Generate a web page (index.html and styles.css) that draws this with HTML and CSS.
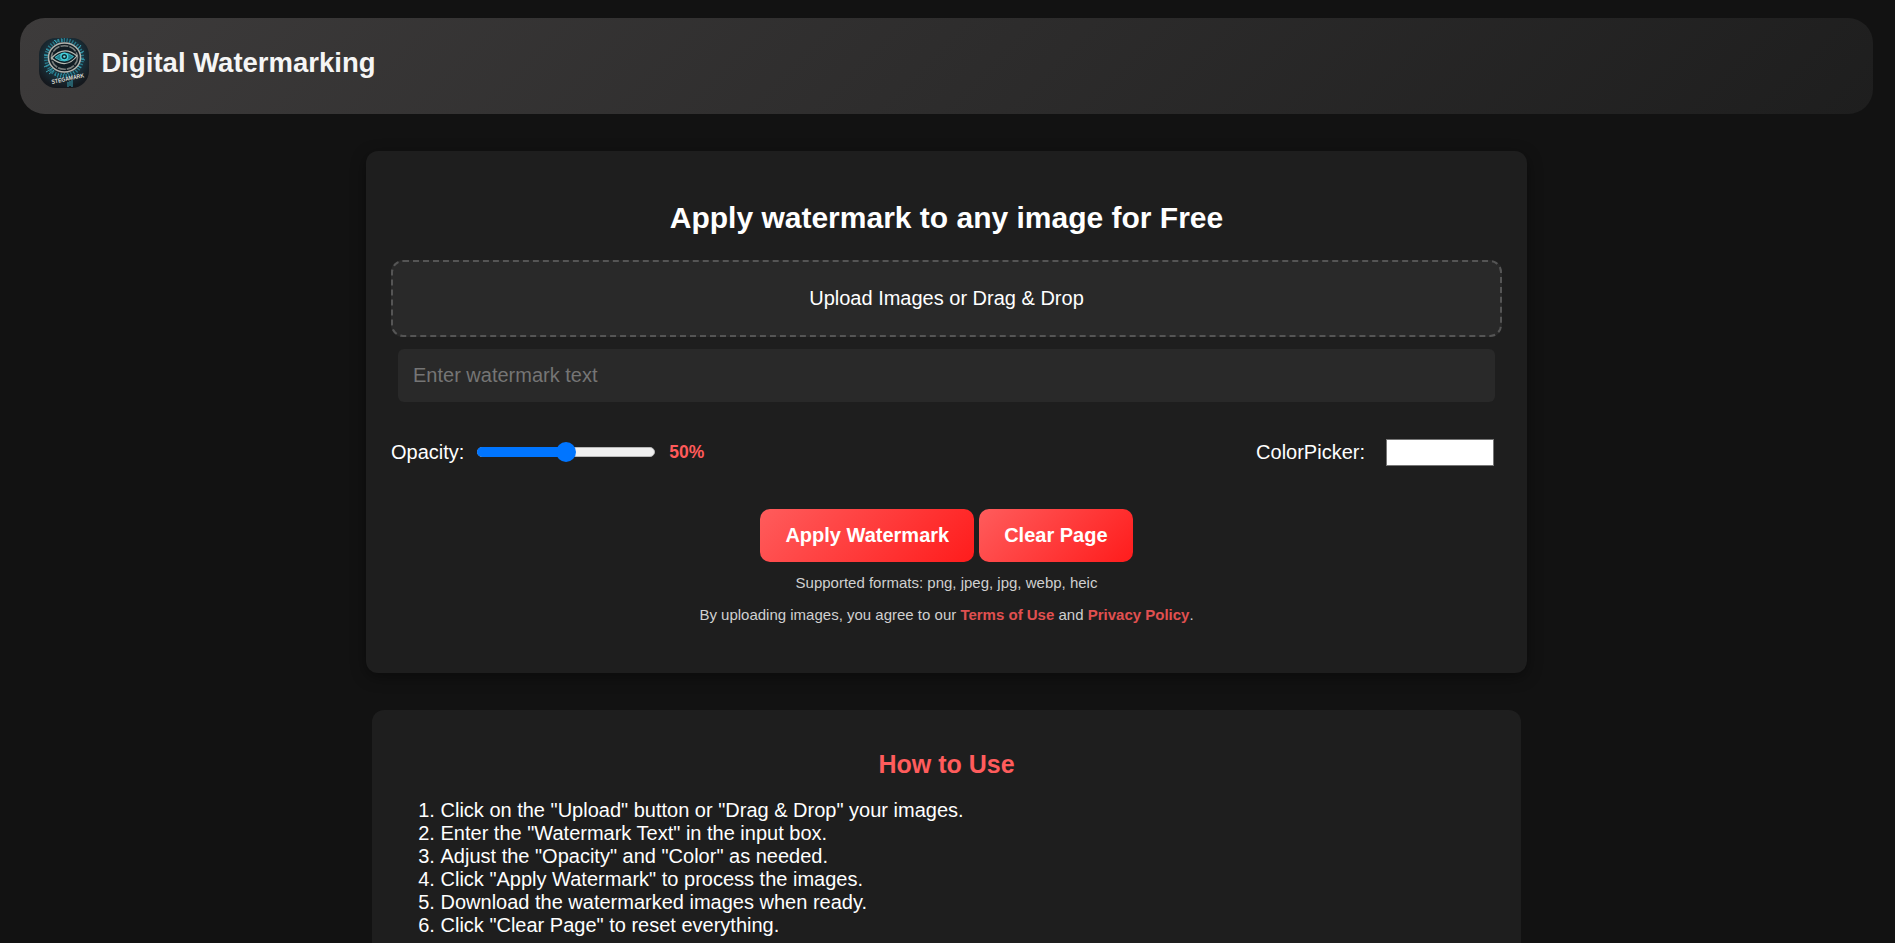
FILE: index.html
```html
<!DOCTYPE html>
<html lang="en">
<head>
<meta charset="utf-8">
<title>Digital Watermarking</title>
<link rel="stylesheet" href="styles.css">
</head>
<body>
<header class="header">
  <svg class="logo" viewBox="0 0 50 50" aria-label="Stegamark">
    <defs>
      <radialGradient id="glow" cx="50%" cy="40%" r="60%"><stop offset="0" stop-color="#1d4450"/><stop offset=".65" stop-color="#1a2f39"/><stop offset="1" stop-color="#15191e"/></radialGradient>
    </defs>
    <rect width="50" height="50" rx="17" fill="url(#glow)"/>
    <g fill="none">
      <circle cx="25" cy="20" r="18" stroke="#27788a" stroke-width="4" stroke-dasharray="1.3 1.5"/>
      <path d="M15 2l3 3M19 1v3M23 1v3M7 11l3 2M5 17l4 1M42 7l-3 4M45 13l-4 2M46 22l-4-1M5 29l6-3M7 34l7-4M10 36l5-4M42 30l-5-3M29 44v5M33 42v7M31 43v5" stroke="#39a0b2"/>
      <path d="M16 37l20-3M18 39l10-2" stroke="#2a8da0" stroke-width="1.6" stroke-dasharray="1 2"/>
    </g>
    <ellipse cx="25.5" cy="19.5" rx="16" ry="14.5" fill="#101c23" stroke="#b4b4ae" stroke-width="1.5"/>
    <ellipse cx="25.5" cy="19.5" rx="13" ry="11.8" fill="none" stroke="#777c7b" stroke-width="1.6" stroke-dasharray="8 1"/>
    <path d="M12.5 20Q25 7 38 18Q27 32 12.5 20Z" fill="#10242c" stroke="#b9bcb5" stroke-width="1.2"/>
    <path d="M16 19.5Q25 11.5 34.5 18.5Q26 27 16 19.5Z" fill="#247f8e" stroke="#44bdc9" stroke-width=".9"/>
    <circle cx="25.3" cy="18.6" r="3.4" fill="#102a32" stroke="#43d2dd" stroke-width="1.4"/>
    <circle cx="25.3" cy="18.6" r="1.2" fill="#71e3e8"/>
    <text class="logo-text" x="13" y="46" transform="rotate(-12 13 46)" textLength="33" lengthAdjust="spacingAndGlyphs">STEGAMARK</text>
  </svg>
  <h1 class="title">Digital Watermarking</h1>
</header>
<main class="container">
  <h2 class="headline">Apply watermark to any image for Free</h2>
  <div class="dropzone">Upload Images or Drag &amp; Drop</div>
  <input class="watermark-text" type="text" placeholder="Enter watermark text">
  <div class="controls">
    <div class="opacity">
      <span>Opacity:</span>
      <div class="slider"><div class="slider-fill"></div><div class="slider-thumb"></div></div>
      <span class="percent">50%</span>
    </div>
    <div class="picker"><span>ColorPicker:</span><div class="swatch"></div></div>
  </div>
  <div class="actions"><button class="btn">Apply Watermark</button><button class="btn">Clear Page</button></div>
  <p class="note formats">Supported formats: png, jpeg, jpg, webp, heic</p>
  <p class="note terms">By uploading images, you agree to our <a class="link">Terms of Use</a> and <a class="link">Privacy Policy</a>.</p>
</main>
<section class="how">
  <h2 class="how-title">How to Use</h2>
  <ol class="steps">
    <li>Click on the "Upload" button or "Drag &amp; Drop" your images.</li>
    <li>Enter the "Watermark Text" in the input box.</li>
    <li>Adjust the "Opacity" and "Color" as needed.</li>
    <li>Click "Apply Watermark" to process the images.</li>
    <li>Download the watermarked images when ready.</li>
    <li>Click "Clear Page" to reset everything.</li>
  </ol>
</section>
</body>
</html>
```
FILE: styles.css
```css
* { box-sizing: border-box; }
html { background: #121212; overflow: hidden; }
body {
  display: flex;
  flex-direction: column;
  margin: 0;
  height: 943px;
  overflow: hidden;
  color: #fff;
  font: 20px/23px "Liberation Sans", Arial, sans-serif;
}
.header {
  display: flex;
  flex: none;
  align-items: flex-start;
  gap: 12.5px;
  width: 1853px;
  height: 96px;
  margin: 18px 0 0 20px;
  padding: 20px 19px;
  border-radius: 25px;
  background: linear-gradient(135deg, #3d3b3b, #1e1e1e);
}
.logo { width: 50px; height: 50px; flex: none; overflow: visible; }
.logo-text { font: bold 6px "Liberation Sans", Arial, sans-serif; fill: #dcdcd6; }
.title { margin: 9px 0 0; font-size: 27.5px; line-height: 31px; color: #f5f5f5; }
.container {
  flex: none;
  width: 1161px;
  height: 522px;
  margin: 37px 0 0 366px;
  padding: 50px 25px 0;
  border-radius: 12px;
  background: #1e1e1e;
  box-shadow: 0 4px 15px rgba(0, 0, 0, .4);
  text-align: center;
}
.headline { margin: 0 0 25px; font-size: 30px; line-height: 34px; }
.dropzone {
  height: 77px;
  padding-top: 25px;
  border: 2px dashed #555;
  border-radius: 12px;
  background: #292929;
}
.watermark-text {
  display: block;
  width: 1097px;
  height: 53px;
  margin: 12px 0 0 7px;
  padding: 0 15px;
  border: 0;
  border-radius: 6px;
  background: #292929;
  color: #fff;
  font: inherit;
}
.watermark-text::placeholder { color: #757575; }
.controls { display: flex; justify-content: space-between; align-items: center; height: 27px; margin-top: 37px; padding-right: 8px; }
.opacity, .picker { display: flex; align-items: center; }
.slider { position: relative; width: 178px; height: 10px; margin: 0 14px 1px 13px; border: 1px solid #b8b8b8; border-radius: 5px; background: #efefef; }
.slider-fill { width: 50%; height: 10px; margin: -1px; border-radius: 5px 0 0 5px; background: #0075ff; }
.slider-thumb { position: absolute; left: 78px; top: -6px; width: 20px; height: 20px; border-radius: 50%; background: #0075ff; }
.percent { font-size: 17.5px; font-weight: bold; color: #ff5a5a; }
.swatch { width: 108px; height: 27px; margin-left: 21px; border: 1px solid #767676; background: #fff; }
.actions { display: flex; justify-content: center; gap: 5px; margin-top: 43px; }
.btn {
  height: 53px;
  padding: 0 25px;
  border: 0;
  border-radius: 10px;
  background: linear-gradient(135deg, #ff5c5c, #ff1c1c);
  color: #fff;
  font: bold 20px/23px "Liberation Sans", Arial, sans-serif;
}
.note { margin: 0; color: #d0d0d0; font-size: 15px; line-height: 17px; }
.formats { margin-top: 12px; }
.terms { margin-top: 15px; }
.link { color: #e05050; font-weight: bold; }
.how {
  flex: 1;
  width: 1149px;
  margin: 37px 0 0 372px;
  padding: 40px 28px 0;
  border-radius: 12px 12px 0 0;
  background: #1e1e1e;
}
.how-title { margin: 0 0 20px; color: #ff5c5c; font-size: 25px; line-height: 29px; text-align: center; }
.steps { margin: 0; padding-left: 40.5px; }
```
